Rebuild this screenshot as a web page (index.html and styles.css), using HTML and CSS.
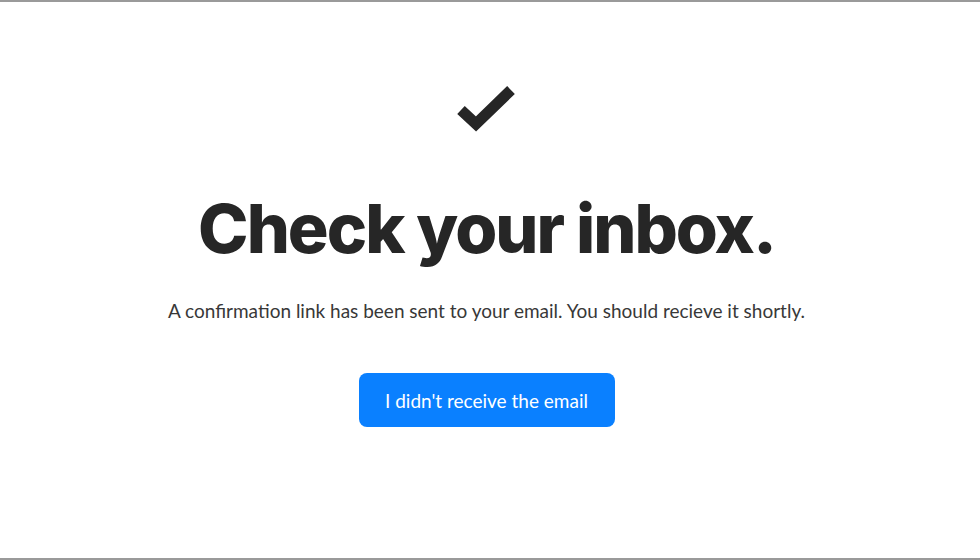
FILE: index.html
```html
<!DOCTYPE html>
<html>
<head>
<meta charset="utf-8">
<link rel="stylesheet" href="styles.css">
</head>
<body>
<main class="page">
  <svg class="check" width="60" height="50" viewBox="0 0 60 50" aria-hidden="true">
    <polyline points="4,27 19,41 54,7" fill="none" stroke="#262626" stroke-width="11" stroke-linecap="butt" stroke-linejoin="miter"/>
  </svg>
  <h1 class="title">Check your inbox.</h1>
  <p class="lead">A confirmation link has been sent to your email. You should recieve it shortly.</p>
  <button class="resend" type="button">I didn't receive the email</button>
</main>
</body>
</html>
```
FILE: styles.css
```css
html, body {
  margin: 0;
  padding: 0;
  background: #fff;
}
.page {
  box-sizing: border-box;
  height: 560px;
  border-top: 2px solid #9a9a9a;
  border-bottom: 2px solid #9a9a9a;
  display: flex;
  flex-direction: column;
  align-items: center;
  padding-top: 81px;
  padding-right: 7px;
}
.check {
  display: block;
}
.title {
  margin: 60px 0 0;
  font-family: Inter, "Liberation Sans", sans-serif;
  font-weight: 800;
  font-size: 68px;
  line-height: 70px;
  letter-spacing: -2px;
  color: #262626;
}
.lead {
  margin: 35px 0 0;
  font-family: Lato, "Open Sans", sans-serif;
  font-size: 19px;
  line-height: 26px;
  color: #383838;
}
.resend {
  margin-top: 49px;
  width: 256px;
  height: 54px;
  border: 0;
  border-radius: 8px;
  background: #0a80ff;
  color: #fff;
  font-family: Lato, "Open Sans", sans-serif;
  font-size: 19px;
  cursor: pointer;
}
```
